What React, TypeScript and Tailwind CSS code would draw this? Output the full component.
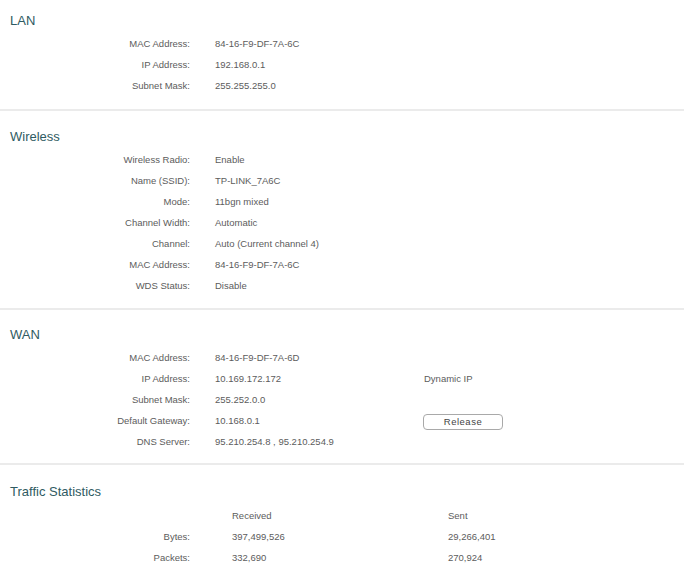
import React from "react";

type Row = { label: string; value: string; extra?: React.ReactNode };

const font = { fontFamily: '"Liberation Sans", Arial, sans-serif' };

function Section({
  title,
  rows,
  pt,
  pb,
}: {
  title: string;
  rows: Row[];
  pt: string;
  pb: string;
}) {
  return (
    <div className={`${pt} ${pb} border-b-2 border-[#ebebeb]`}>
      <div className="h-[20px] pl-[10px] text-[13px] leading-[20px] text-[#2f5b62]">{title}</div>
      <div className="mt-[3px] flex flex-col">
        {rows.map((r) => (
          <div key={r.label} className="flex h-[21px] items-center text-[9.5px] text-[#5c5c5c]">
            <div className="w-[190px] shrink-0 text-right">{r.label}</div>
            <div className="ml-[25px] w-[209px] shrink-0">{r.value}</div>
            {r.extra}
          </div>
        ))}
      </div>
    </div>
  );
}

export default function App() {
  return (
    <div className="h-[576px] w-[684px] overflow-hidden bg-white" style={font}>
      <Section
        title="LAN"
        pt="pt-[11px]"
        pb="pb-[12px]"
        rows={[
          { label: "MAC Address:", value: "84-16-F9-DF-7A-6C" },
          { label: "IP Address:", value: "192.168.0.1" },
          { label: "Subnet Mask:", value: "255.255.255.0" },
        ]}
      />
      <Section
        title="Wireless"
        pt="pt-[16px]"
        pb="pb-[11px]"
        rows={[
          { label: "Wireless Radio:", value: "Enable" },
          { label: "Name (SSID):", value: "TP-LINK_7A6C" },
          { label: "Mode:", value: "11bgn mixed" },
          { label: "Channel Width:", value: "Automatic" },
          { label: "Channel:", value: "Auto (Current channel 4)" },
          { label: "MAC Address:", value: "84-16-F9-DF-7A-6C" },
          { label: "WDS Status:", value: "Disable" },
        ]}
      />
      <Section
        title="WAN"
        pt="pt-[15px]"
        pb="pb-[10px]"
        rows={[
          { label: "MAC Address:", value: "84-16-F9-DF-7A-6D" },
          {
            label: "IP Address:",
            value: "10.169.172.172",
            extra: <div>Dynamic IP</div>,
          },
          { label: "Subnet Mask:", value: "255.252.0.0" },
          {
            label: "Default Gateway:",
            value: "10.168.0.1",
            extra: (
              <button className="-ml-px h-[16px] w-[80px] rounded-[4px] border border-[#a9a9a9] bg-white text-[9.5px] leading-[14px] tracking-[0.5px] text-[#444]">
                Release
              </button>
            ),
          },
          { label: "DNS Server:", value: "95.210.254.8 , 95.210.254.9" },
        ]}
      />
      <div className="pt-[17px]">
        <div className="h-[20px] pl-[10px] text-[13px] leading-[20px] text-[#2f5b62]">Traffic Statistics</div>
        <div className="mt-[4px] flex flex-col text-[9.5px] text-[#5c5c5c]">
          {[
            ["", "Received", "Sent"],
            ["Bytes:", "397,499,526", "29,266,401"],
            ["Packets:", "332,690", "270,924"],
          ].map(([a, b, c], i) => (
            <div key={i} className="flex h-[21px] items-center">
              <div className="w-[190px] shrink-0 text-right">{a}</div>
              <div className="ml-[42px] w-[216px] shrink-0">{b}</div>
              <div>{c}</div>
            </div>
          ))}
        </div>
      </div>
    </div>
  );
}
